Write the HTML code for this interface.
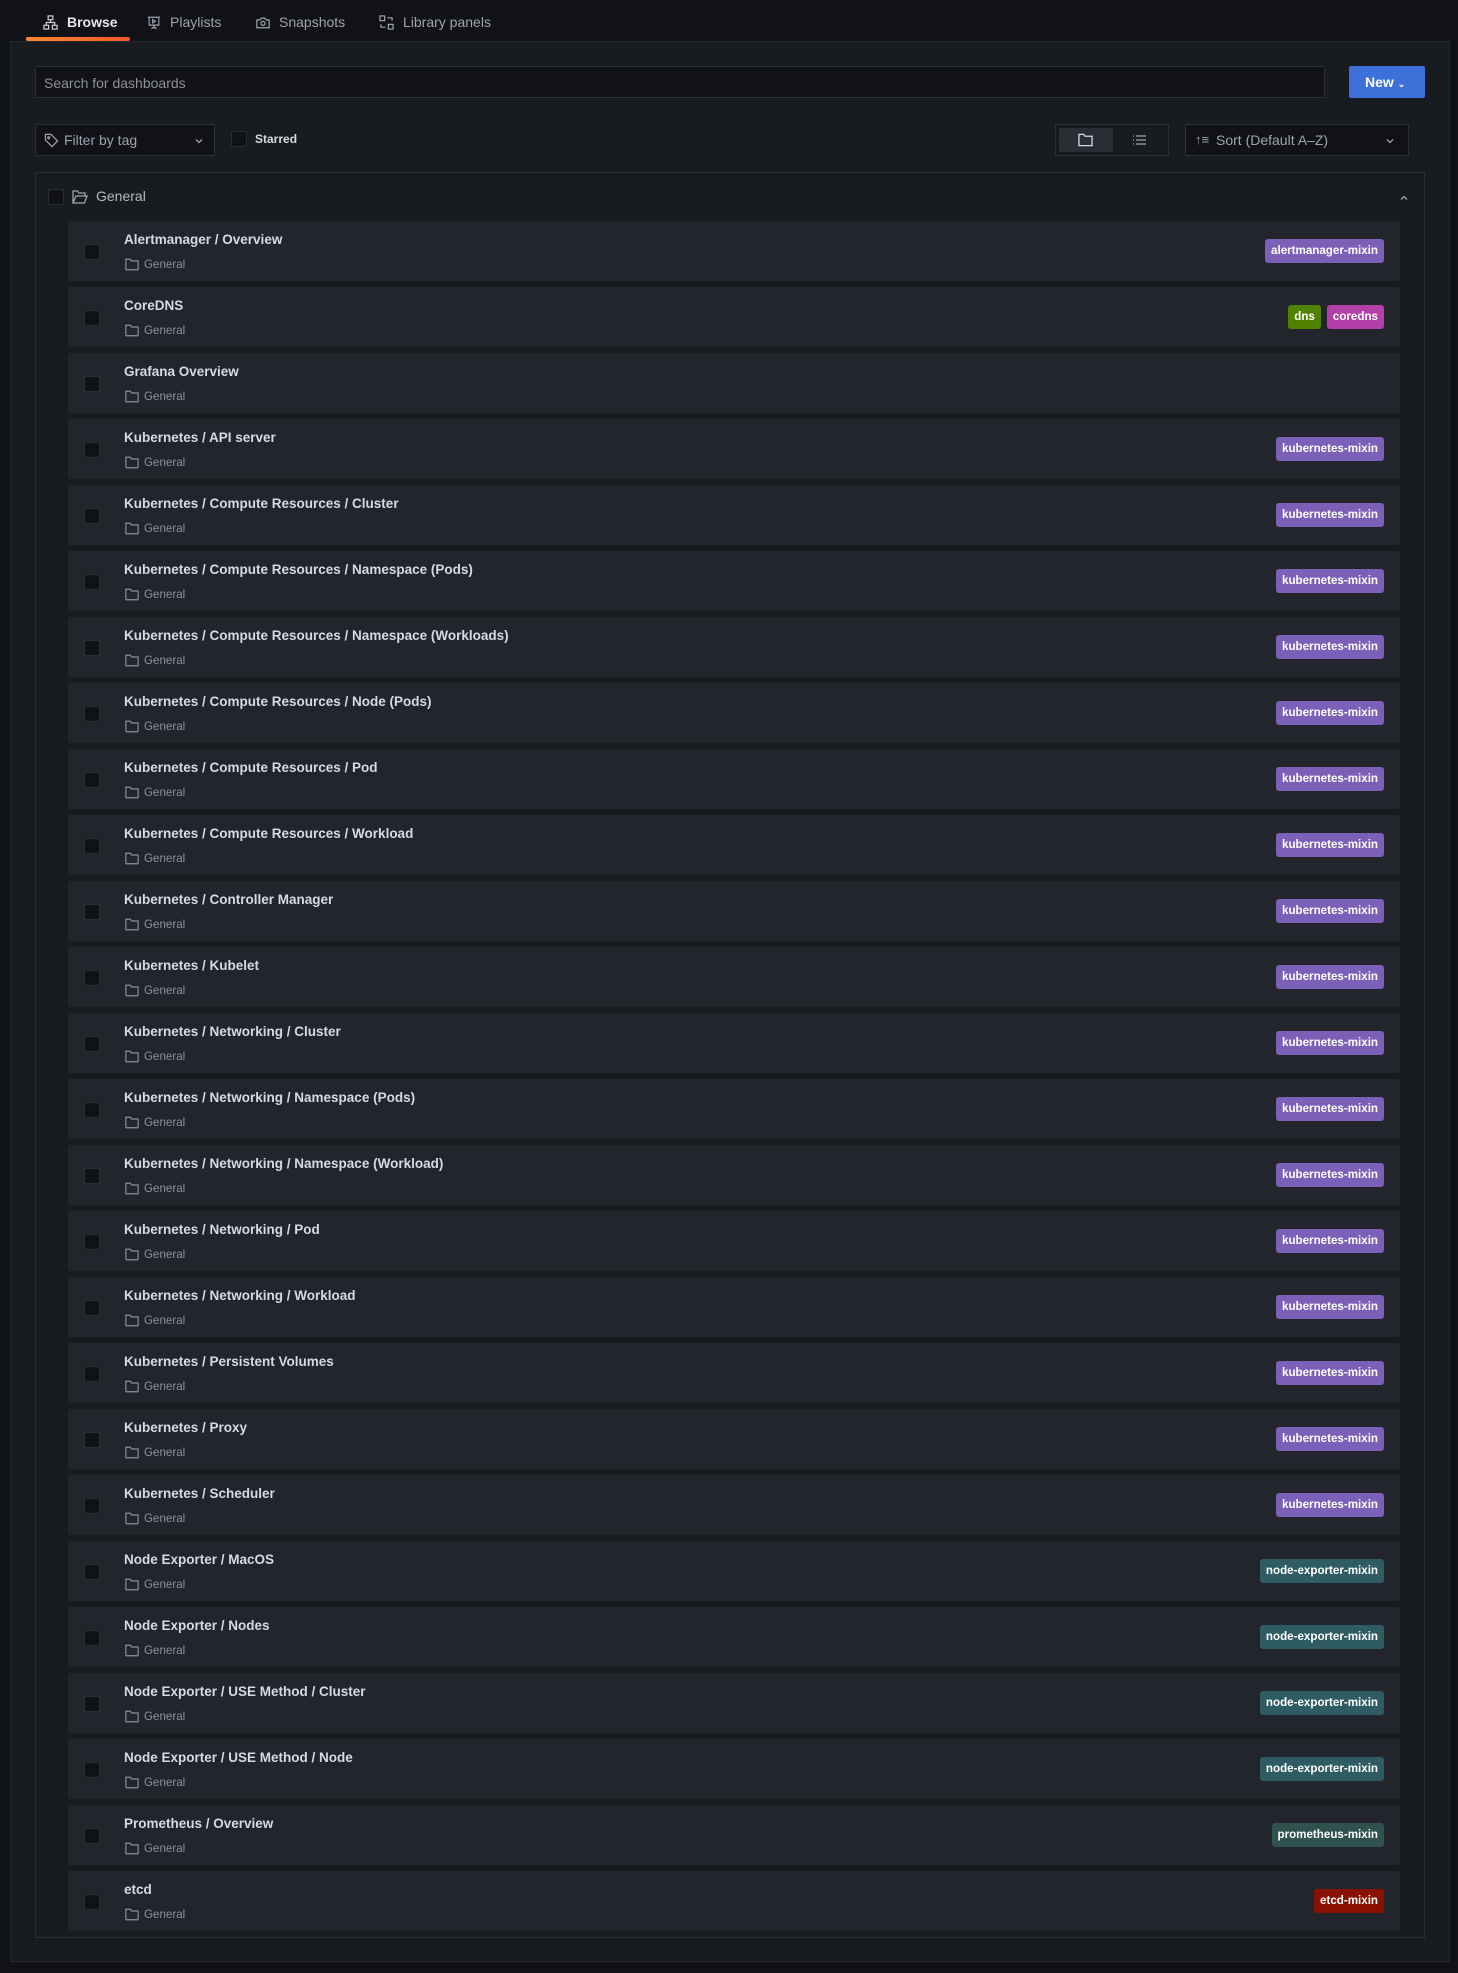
<!DOCTYPE html>
<html><head><meta charset="utf-8"><style>
*{box-sizing:border-box;margin:0;padding:0}
body{width:1458px;height:1973px;background:#111217;font-family:"Liberation Sans",sans-serif;color:#ccccdc;position:relative;overflow:hidden}
.abs{position:absolute}
.tab{position:absolute;top:13px;height:18px;font-size:14px;line-height:18px;color:#9fa3ad;display:flex;align-items:center}
.tab svg{margin-right:9px}
.panel{position:absolute;left:10px;top:41px;width:1440px;height:1921px;background:#181b1f;border:1px solid #25282d}
.inp{position:absolute;background:#111217;border:1px solid #2c2f35;border-radius:2px}
.cb{position:absolute;width:16px;height:16px;background:#111217;border:1px solid #2a2d33;border-radius:2px}
.section{position:absolute;left:35px;top:172px;width:1390px;height:1766px;border:1px solid #2c2f35}
.row{position:absolute;left:68px;width:1332px;height:60px;background:#22252b;border-radius:2px}
.row .cb{left:16px;top:23px}
.row .t{position:absolute;left:56px;top:10px;font-size:13.5px;font-weight:bold;color:#d8d9e3;line-height:17px}
.row .s{position:absolute;left:57px;top:36px;font-size:11.6px;color:#8e909a;line-height:15px;display:flex;align-items:center}
.row .s svg{margin-right:5px}
.tags{position:absolute;right:16px;top:18px;display:flex;gap:6px}
.tag{height:24px;line-height:24px;padding:0 6px;font-size:11.6px;font-weight:bold;color:#fff;border-radius:3px}
.k{background:#7c5fb6}.n{background:#2f5c63}.p{background:#2f524f}.e{background:#8a1102}.a{background:#7c5fb6}.d{background:#508200}.c{background:#b240a8}
</style></head><body>
<div class="tab" style="left:43px;color:#e6e7ee;font-weight:bold">
<svg width="15" height="15" viewBox="0 0 16 16" fill="none" stroke="#cfd0d8" stroke-width="1.3"><rect x="5.5" y="1" width="5" height="4"/><rect x="1" y="11" width="5" height="4"/><rect x="10" y="11" width="5" height="4"/><path d="M8 5v3M3.5 11V8h9v3"/></svg>Browse</div>
<div class="abs" style="left:26px;top:37px;width:104px;height:4px;border-radius:2px;background:linear-gradient(90deg,#ff8833,#f05a28)"></div>
<div class="tab" style="left:147px"><svg width="14" height="15" viewBox="0 0 16 16" fill="none" stroke="#9fa3ad" stroke-width="1.3"><path d="M1 2h14M2.5 2v9h11V2M8 11v4M5 15l3-2 3 2"/><path d="M6.5 4.5v4l3-2z"/></svg>Playlists</div>
<div class="tab" style="left:256px"><svg width="14" height="13" viewBox="0 0 16 14" fill="none" stroke="#9fa3ad" stroke-width="1.4"><path d="M1 4h3.5l1.5-2h4l1.5 2H15v9H1z"/><circle cx="8" cy="8" r="2.3"/></svg>Snapshots</div>
<div class="tab" style="left:379px"><svg width="15" height="15" viewBox="0 0 16 16" fill="none" stroke="#9fa3ad" stroke-width="1.3"><rect x="1" y="1" width="5" height="5"/><rect x="10" y="10" width="5" height="5"/><path d="M9 3h5v3M7 13H2v-3"/></svg>Library panels</div>

<div class="panel"></div>
<div class="inp" style="left:35px;top:66px;width:1290px;height:32px"><span class="abs" style="left:8px;top:8px;font-size:14px;color:#8e909a">Search for dashboards</span></div>
<div class="abs" style="left:1349px;top:66px;width:76px;height:32px;background:#3d71d9;border-radius:2px;color:#fff;font-size:14px;font-weight:bold;line-height:32px;padding-left:16px">New <span style="font-size:9px">&#8964;</span></div>

<div class="inp" style="left:35px;top:124px;width:180px;height:32px">
<svg class="abs" style="left:8px;top:8px" width="15" height="15" viewBox="0 0 16 16" fill="none" stroke="#9fa3ad" stroke-width="1.3"><path d="M1.5 1.5h6l7 7-6 6-7-7z"/><circle cx="5" cy="5" r="1"/></svg>
<span class="abs" style="left:28px;top:7px;font-size:14px;color:#9fa3ad">Filter by tag</span>
<svg class="abs" style="left:159px;top:13px" width="8" height="6" viewBox="0 0 8 6" fill="none" stroke="#9fa3ad" stroke-width="1.3"><path d="M1 1.5l3 3 3-3"/></svg></div>
<div class="cb" style="left:231px;top:131px"></div>
<span class="abs" style="left:255px;top:132px;font-size:12px;font-weight:bold;color:#d8d9e3">Starred</span>

<div class="inp" style="left:1055px;top:124px;width:114px;height:32px;background:#181b1f">
<div class="abs" style="left:3px;top:3px;width:54px;height:24px;background:#2a2d33;border-radius:2px"></div>
<svg class="abs" style="left:22px;top:8px" width="15" height="14" viewBox="0 0 16 14" fill="none" stroke="#d8d9e3" stroke-width="1.4"><path d="M1 1h5l1.5 2H15v10H1z"/></svg>
<svg class="abs" style="left:76px;top:9px" width="15" height="12" viewBox="0 0 15 12" fill="none" stroke="#9fa3ad" stroke-width="1.3"><path d="M1 2h1M4 2h10M1 6h1M4 6h10M1 10h1M4 10h10"/></svg></div>
<div class="inp" style="left:1185px;top:124px;width:224px;height:32px">
<span class="abs" style="left:9px;top:7px;font-size:13px;color:#9fa3ad">↑≡</span>
<span class="abs" style="left:30px;top:7px;font-size:14px;color:#9fa3ad">Sort (Default A–Z)</span>
<svg class="abs" style="left:200px;top:13px" width="8" height="6" viewBox="0 0 8 6" fill="none" stroke="#9fa3ad" stroke-width="1.3"><path d="M1 1.5l3 3 3-3"/></svg></div>

<div class="section"></div>
<div class="cb" style="left:48px;top:189px"></div>
<svg class="abs" style="left:72px;top:190px" width="16" height="14" viewBox="0 0 16 14" fill="none" stroke="#9fa3ad" stroke-width="1.3"><path d="M1 13V1h4.5l1.5 2h6v3M1 13h11.5L15 6H4z"/></svg>
<span class="abs" style="left:96px;top:188px;font-size:14px;color:#b7b9c3">General</span>
<svg class="abs" style="left:1400px;top:195px" width="8" height="6" viewBox="0 0 8 6" fill="none" stroke="#9fa3ad" stroke-width="1.3"><path d="M1 4.5l3-3 3 3"/></svg>

<div id="rows"></div>
<script>
var R=[["Alertmanager / Overview",[["a","alertmanager-mixin"]]],["CoreDNS",[["d","dns"],["c","coredns"]]],["Grafana Overview",[]],
["Kubernetes / API server","k"],["Kubernetes / Compute Resources / Cluster","k"],["Kubernetes / Compute Resources / Namespace (Pods)","k"],
["Kubernetes / Compute Resources / Namespace (Workloads)","k"],["Kubernetes / Compute Resources / Node (Pods)","k"],["Kubernetes / Compute Resources / Pod","k"],
["Kubernetes / Compute Resources / Workload","k"],["Kubernetes / Controller Manager","k"],["Kubernetes / Kubelet","k"],["Kubernetes / Networking / Cluster","k"],
["Kubernetes / Networking / Namespace (Pods)","k"],["Kubernetes / Networking / Namespace (Workload)","k"],["Kubernetes / Networking / Pod","k"],
["Kubernetes / Networking / Workload","k"],["Kubernetes / Persistent Volumes","k"],["Kubernetes / Proxy","k"],["Kubernetes / Scheduler","k"],
["Node Exporter / MacOS","n"],["Node Exporter / Nodes","n"],["Node Exporter / USE Method / Cluster","n"],["Node Exporter / USE Method / Node","n"],
["Prometheus / Overview",[["p","prometheus-mixin"]]],["etcd",[["e","etcd-mixin"]]]];
var h="",fold='<svg width="14" height="13" viewBox="0 0 16 14" fill="none" stroke="#8e909a" stroke-width="1.3"><path d="M1 1h5l1.5 2H15v10H1z"/></svg>';
R.forEach(function(r,i){var t=r[1];if(t=="k")t=[["k","kubernetes-mixin"]];if(t=="n")t=[["n","node-exporter-mixin"]];
h+='<div class="row" style="top:'+(221+i*66)+'px"><div class="cb"></div><div class="t">'+r[0]+'</div><div class="s">'+fold+'General</div><div class="tags">'+t.map(function(g){return '<span class="tag '+g[0]+'">'+g[1]+'</span>'}).join("")+'</div></div>';});
document.getElementById("rows").innerHTML=h;
</script>
</body></html>
